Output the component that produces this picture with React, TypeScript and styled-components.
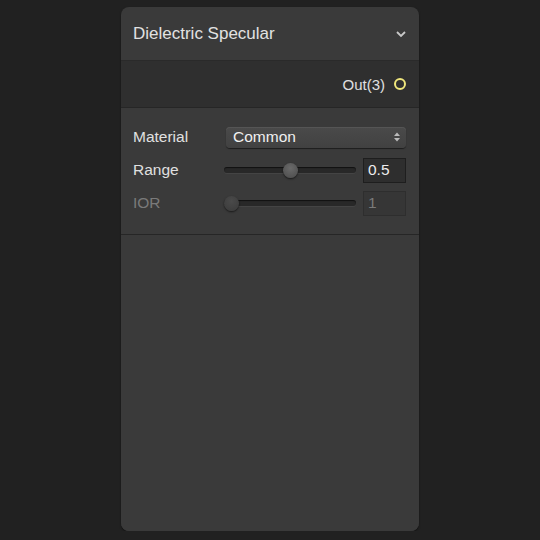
import styled, { createGlobalStyle } from "styled-components";

const Global = createGlobalStyle`
  body {
    margin: 0;
    background: #212121;
    font-family: "Liberation Sans", Arial, sans-serif;
  }
`;

const Page = styled.div`
  display: flex;
  justify-content: center;
  padding-top: 7px;
`;

const Node = styled.div`
  width: 298px;
  height: 524px;
  background: #3a3a3a;
  border-radius: 8px;
  box-shadow: 0 1px 2px rgba(0, 0, 0, 0.5);
  display: flex;
  flex-direction: column;
  overflow: hidden;
`;

const Header = styled.div`
  height: 53px;
  display: flex;
  align-items: center;
  justify-content: space-between;
  padding: 0 12px 0 12px;
  border-bottom: 1px solid #2a2a2a;
  color: #e2e2e2;
  font-size: 17px;
`;

const Outputs = styled.div`
  height: 46px;
  display: flex;
  align-items: center;
  justify-content: flex-end;
  gap: 9px;
  padding-right: 13px;
  background: #2f2f2f;
  border-bottom: 1px solid #262626;
  color: #e0e0e0;
  font-size: 15px;
`;

const Socket = styled.span`
  width: 8px;
  height: 8px;
  border-radius: 50%;
  border: 2px solid #efe67c;
`;

const Params = styled.div`
  display: flex;
  flex-direction: column;
  padding: 15px 13px 17px 12px;
  gap: 5px;
  border-bottom: 1px solid #262626;
  box-shadow: 0 1px 0 #333;
`;

const Row = styled.div`
  display: grid;
  grid-template-columns: 90px 1fr;
  align-items: center;
  height: 28px;
`;

const Label = styled.span<{ $disabled?: boolean }>`
  color: ${(p) => (p.$disabled ? "#7a7a7a" : "#e0e0e0")};
  font-size: 15.5px;
`;

const Select = styled.div`
  height: 21px;
  margin-left: 3px;
  display: flex;
  align-items: center;
  justify-content: space-between;
  padding: 0 6px 0 7px;
  border-radius: 4px;
  background: linear-gradient(#4a4a4a, #414141);
  box-shadow: 0 1px 1px rgba(0, 0, 0, 0.5), inset 0 1px 0 #555;
  color: #f0f0f0;
  font-size: 15.5px;
`;

const SliderRow = styled.div`
  display: flex;
  align-items: center;
  gap: 7px;
`;

const Track = styled.div`
  position: relative;
  flex: 1;
  height: 6px;
  border-radius: 3px;
  background: #282828;
  box-shadow: inset 0 1px 1px rgba(0, 0, 0, 0.6), 0 1px 0 #444;
  margin-left: 1px;
`;

const Thumb = styled.span<{ $disabled?: boolean }>`
  position: absolute;
  top: 50%;
  width: 15px;
  height: 15px;
  margin: -7.5px 0 0 -7.5px;
  border-radius: 50%;
  background: ${(p) =>
    p.$disabled
      ? "radial-gradient(circle at 50% 35%, #4a4a4a, #3a3a3a)"
      : "radial-gradient(circle at 50% 35%, #6a6a6a, #4a4a4a)"};
  box-shadow: 0 1px 2px rgba(0, 0, 0, 0.6);
`;

const NumBox = styled.div<{ $disabled?: boolean }>`
  width: 37px;
  height: 23px;
  display: flex;
  align-items: center;
  padding-left: 4px;
  background: ${(p) => (p.$disabled ? "#363636" : "#2e2e2e")};
  border: 1px solid ${(p) => (p.$disabled ? "#2e2e2e" : "#1e1e1e")};
  color: ${(p) => (p.$disabled ? "#7a7a7a" : "#ececec")};
  font-size: 15.5px;
`;

const Rest = styled.div`
  flex: 1;
  background: #3a3a3a;
`;

function Chevron() {
  return (
    <svg width="12" height="8" viewBox="0 0 12 8">
      <path d="M2 2 L6 6 L10 2" fill="none" stroke="#c8c8c8" strokeWidth="1.8" />
    </svg>
  );
}

function UpDown() {
  return (
    <svg width="6" height="10" viewBox="0 0 6 10">
      <path d="M0 4 L3 0.5 L6 4 Z" fill="#bbb" />
      <path d="M0 6 L3 9.5 L6 6 Z" fill="#bbb" />
    </svg>
  );
}

const sliders = [
  { label: "Range", value: "0.5", pos: 50, disabled: false },
  { label: "IOR", value: "1", pos: 6, disabled: true },
];

export default function App() {
  return (
    <>
      <Global />
      <Page>
        <Node>
          <Header>
            <span>Dielectric Specular</span>
            <Chevron />
          </Header>
          <Outputs>
            <span>Out(3)</span>
            <Socket />
          </Outputs>
          <Params>
            <Row>
              <Label>Material</Label>
              <Select>
                <span>Common</span>
                <UpDown />
              </Select>
            </Row>
            {sliders.map((s) => (
              <Row key={s.label}>
                <Label $disabled={s.disabled}>{s.label}</Label>
                <SliderRow>
                  <Track>
                    <Thumb $disabled={s.disabled} style={{ left: `${s.pos}%` }} />
                  </Track>
                  <NumBox $disabled={s.disabled}>{s.value}</NumBox>
                </SliderRow>
              </Row>
            ))}
          </Params>
          <Rest />
        </Node>
      </Page>
    </>
  );
}
